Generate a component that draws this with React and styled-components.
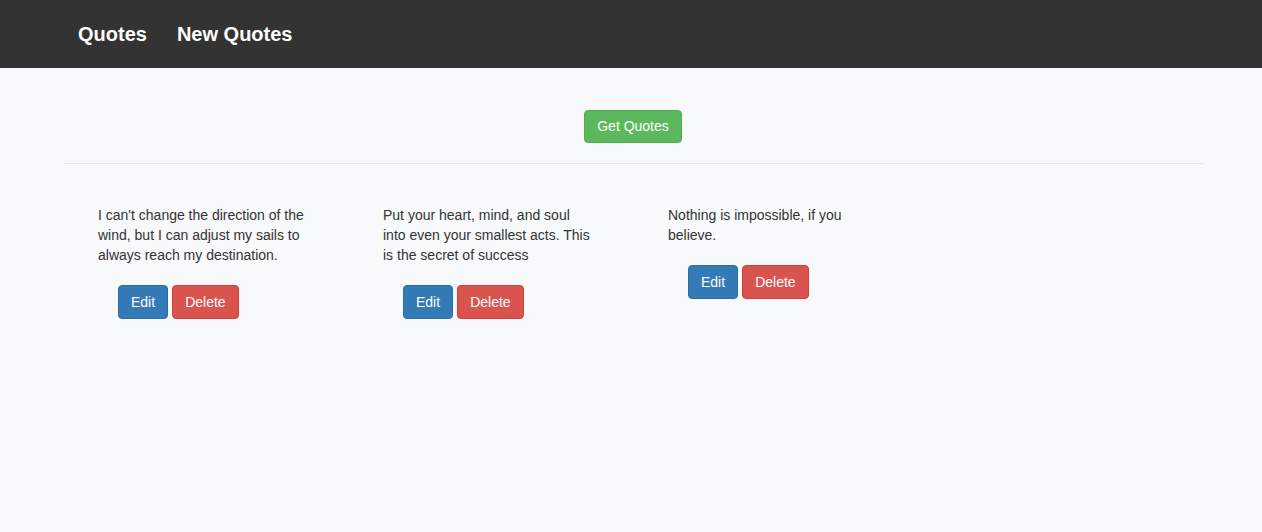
import React from "react";
import styled, { createGlobalStyle } from "styled-components";

const GlobalStyle = createGlobalStyle`
  html, body {
    margin: 0;
    padding: 0;
    background: #f8f9fa;
    font-family: "Liberation Sans", Arial, sans-serif;
    font-size: 14px;
    line-height: 20px;
    color: #333;
  }
`;

const NavBar = styled.nav`
  height: 68px;
  background: #333333;
  display: flex;
  align-items: center;
  padding-left: 78px;
  gap: 30px;
`;

const NavLink = styled.a`
  color: #fff;
  font-size: 20px;
  font-weight: bold;
  text-decoration: none;
  cursor: pointer;
`;

const Container = styled.div`
  width: 1140px;
  margin-left: calc(50% - 568px);
`;

const Toolbar = styled.div`
  display: flex;
  justify-content: center;
  padding-top: 42px;
`;

const Button = styled.button`
  font-family: "Liberation Sans", Arial, sans-serif;
  font-size: 14px;
  line-height: 19px;
  padding: 6px 12px;
  border-radius: 4px;
  color: #fff;
  cursor: pointer;
  background: ${p => p.$bg};
  border: 1px solid ${p => p.$border};
  height: ${p => p.$h || 34}px;
`;

const Divider = styled.hr`
  border: 0;
  border-top: 1px solid #e6e6e6;
  margin: 20px 0 0;
`;

const Grid = styled.div`
  display: grid;
  grid-template-columns: repeat(4, 285px);
  padding-top: 41px;
`;

const Card = styled.div`
  padding: 0 35px;
`;

const QuoteText = styled.p`
  margin: 0;
  width: 209px;
`;

const Actions = styled.div`
  display: flex;
  gap: 4px;
  margin: 20px 0 0 20px;
`;

const quotes = [
  "I can't change the direction of the wind, but I can adjust my sails to always reach my destination.",
  "Put your heart, mind, and soul into even your smallest acts. This is the secret of success",
  "Nothing is impossible, if you believe.",
];

export default function App() {
  return (
    <>
      <GlobalStyle />
      <NavBar>
        <NavLink>Quotes</NavLink>
        <NavLink>New Quotes</NavLink>
      </NavBar>
      <Container>
        <Toolbar>
          <Button $bg="#5cb85c" $border="#4cae4c" $h={33}>Get Quotes</Button>
        </Toolbar>
        <Divider />
        <Grid>
          {quotes.map(q => (
            <Card key={q}>
              <QuoteText>{q}</QuoteText>
              <Actions>
                <Button $bg="#337ab7" $border="#2e6da4">Edit</Button>
                <Button $bg="#d9534f" $border="#d43f3a">Delete</Button>
              </Actions>
            </Card>
          ))}
        </Grid>
      </Container>
    </>
  );
}
